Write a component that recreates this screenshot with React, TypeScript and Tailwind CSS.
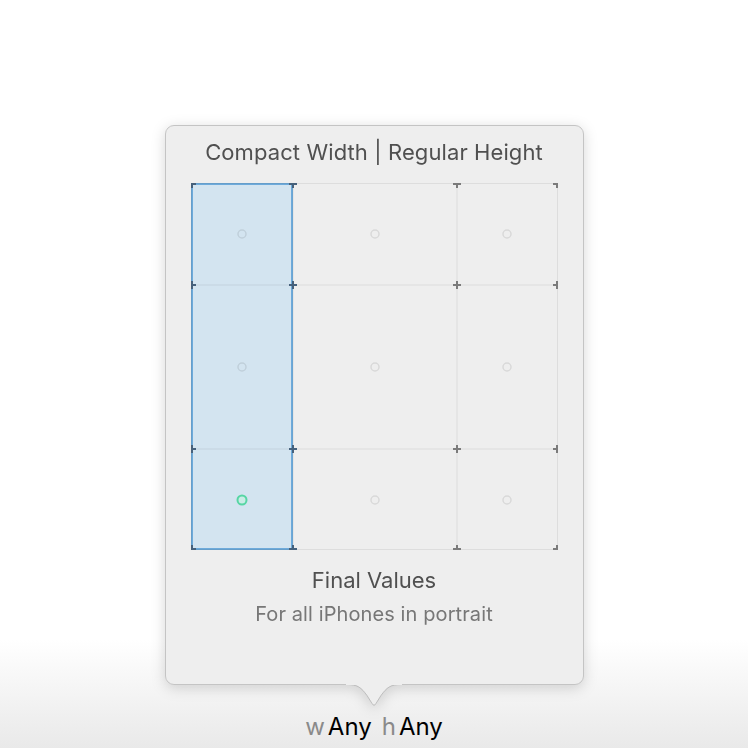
import React from "react";

const COLS = [0, 102, 266, 367];
const ROWS = [0, 102, 266, 367];

// cell placement classes written out in full so Tailwind picks them up
const CELLS = [
  { pos: "col-start-1 row-start-1", active: false },
  { pos: "col-start-2 row-start-1", active: false },
  { pos: "col-start-3 row-start-1", active: false },
  { pos: "col-start-1 row-start-2", active: false },
  { pos: "col-start-2 row-start-2", active: false },
  { pos: "col-start-3 row-start-2", active: false },
  { pos: "col-start-1 row-start-3", active: true },
  { pos: "col-start-2 row-start-3", active: false },
  { pos: "col-start-3 row-start-3", active: false },
];

const clamp = (v: number) => Math.min(Math.max(v, 0.5), 366.5);

function GridLines() {
  return (
    <svg className="absolute inset-0 pointer-events-none" width={367} height={367}>
      {COLS.map((x) => (
        <line key={"v" + x} x1={clamp(x)} y1={0} x2={clamp(x)} y2={367} stroke="rgba(0,0,0,0.07)" strokeWidth={1} />
      ))}
      {ROWS.map((y) => (
        <line key={"h" + y} x1={0} y1={clamp(y)} x2={367} y2={clamp(y)} stroke="rgba(0,0,0,0.07)" strokeWidth={1} />
      ))}
    </svg>
  );
}

function TickMarks() {
  const a = 4;
  const marks: React.ReactNode[] = [];
  COLS.forEach((x, i) => {
    ROWS.forEach((y) => {
      const cx = Math.min(Math.max(x, 1), 366);
      const cy = Math.min(Math.max(y, 1), 366);
      const color = i < 2 ? "#46617c" : "#7b7b7b";
      marks.push(
        <g key={x + "-" + y} stroke={color} strokeWidth={2}>
          <line x1={Math.max(cx - a, 0)} y1={cy} x2={Math.min(cx + a, 367)} y2={cy} />
          <line x1={cx} y1={Math.max(cy - a, 0)} x2={cx} y2={Math.min(cy + a, 367)} />
        </g>
      );
    });
  });
  return (
    <svg className="absolute inset-0 pointer-events-none" width={367} height={367}>
      {marks}
    </svg>
  );
}

function Dot({ active }: { active: boolean }) {
  return active ? (
    <svg width={14} height={14}>
      <circle cx={7} cy={7} r={4.5} fill="#c9ece6" stroke="#56d6a4" strokeWidth={2} />
    </svg>
  ) : (
    <svg width={14} height={14}>
      <circle cx={7} cy={7} r={4} fill="none" stroke="rgba(0,0,0,0.09)" strokeWidth={1.5} />
    </svg>
  );
}

function SizeClassGrid() {
  return (
    <div className="relative mx-auto grid h-[367px] w-[367px] grid-cols-[102px_164px_101px] grid-rows-[102px_164px_101px]">
      <div className="col-start-1 row-start-1 row-span-3 border-2 border-[#6eaada] bg-[#d3e4f0]" />
      <div className="absolute inset-0">
        <GridLines />
      </div>
      {CELLS.map((c, i) => (
        <div key={i} className={`${c.pos} z-20 flex items-center justify-center`}>
          <Dot active={c.active} />
        </div>
      ))}
      <div className="absolute inset-0 z-30">
        <TickMarks />
      </div>
    </div>
  );
}

function PopoverArrow() {
  return (
    <svg className="absolute left-1/2 top-full -ml-[28px] -mt-[1px]" width={56} height={25}>
      <path d="M0,0 C12,0 15,3 21,11 L26,19 Q28,22.5 30,19 L35,11 C41,3 44,0 56,0 Z" fill="#eeeeee" />
      <path d="M0,0.5 C12,0.5 15,3.5 21,11.5 L26,19.5 Q28,23 30,19.5 L35,11.5 C41,3.5 44,0.5 56,0.5" fill="none" stroke="#bdbdbd" strokeWidth={1} />
      <rect x={0} y={0} width={56} height={1} fill="#eeeeee" />
    </svg>
  );
}

export default function App() {
  return (
    <main className="flex h-[748px] w-[748px] flex-col items-center bg-[linear-gradient(to_bottom,#ffffff_640px,#e9e9e9_748px)] pt-[125px] font-['Inter',sans-serif]">
      <div className="relative h-[560px] w-[419px] drop-shadow-[0_3px_7px_rgba(0,0,0,0.16)]">
        <div className="flex h-full w-full flex-col rounded-[9px] border border-[#c4c4c4] bg-[#eeeeee] pt-[12px]">
          <h1 className="text-center text-[22px] leading-[29px] tracking-[0.1px] text-[#505050]">
            Compact Width | Regular Height
          </h1>
          <div className="mt-[16px]">
            <SizeClassGrid />
          </div>
          <p className="mt-[16px] text-center text-[22px] leading-[28px] text-[#505050]">Final Values</p>
          <p className="mt-[7px] text-center text-[20px] leading-[26px] tracking-[0.1px] text-[#777777]">
            For all iPhones in portrait
          </p>
        </div>
        <PopoverArrow />
      </div>
      <div className="mt-[27px] flex items-baseline text-[24px] leading-[30px]">
        <span className="text-[#8a8a8a]">w</span>
        <span className="ml-[3px] text-black">Any</span>
        <span className="ml-[10px] text-[#8a8a8a]">h</span>
        <span className="ml-[3px] text-black">Any</span>
      </div>
    </main>
  );
}
